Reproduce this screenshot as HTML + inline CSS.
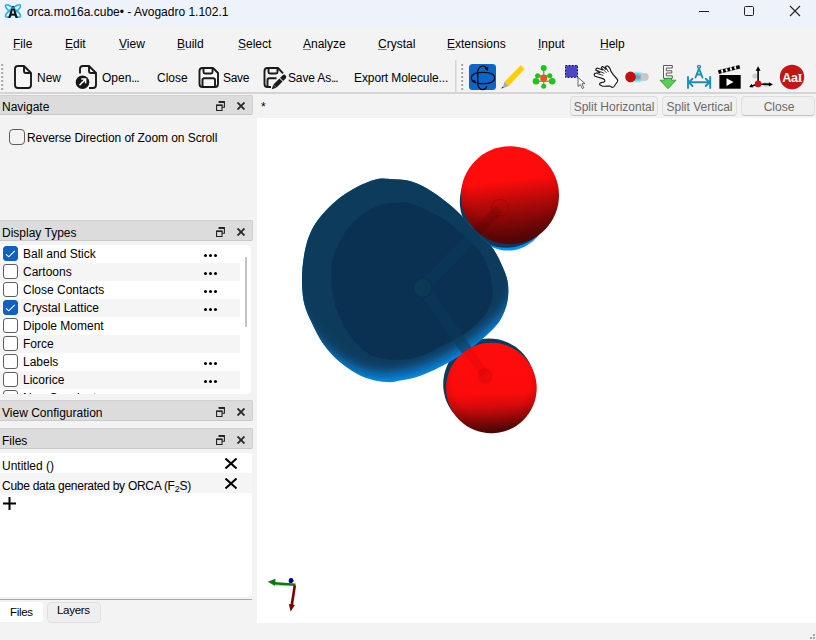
<!DOCTYPE html>
<html><head><meta charset="utf-8">
<style>
*{margin:0;padding:0;box-sizing:border-box}
html,body{width:816px;height:640px;overflow:hidden;background:#f3f3f3;font-family:"Liberation Sans",sans-serif;color:#000}
.a{position:absolute}
.t{position:absolute;white-space:nowrap;font-size:12px;line-height:14px}
.u{text-decoration:underline;text-decoration-color:#7a7a7a;text-underline-offset:1px;text-decoration-thickness:1.3px}
#title{left:0;top:0;width:816px;height:27px;background:linear-gradient(#eef3fb 0,#eef3fb 26px,#f0f2f6 26px)}
#menu{left:0;top:27px;width:816px;height:33px;background:#f3f3f3}
#tool{left:0;top:60px;width:816px;height:34px;background:#f3f3f3;border-bottom:2px solid #d4d4d4}
.hdr{position:absolute;left:0;width:253px;height:20px;background:#dcdcdc;border:1px solid #d0d0d0;border-bottom-color:#c8c8c8;border-left:none;border-radius:0 2px 2px 0}
.hdr .t{left:2px;top:4px;font-size:12px}
.fl{position:absolute;left:216px;top:5px;width:9px;height:10px}
.cx{position:absolute;left:237px;top:6px;width:8px;height:8px}
.h21{height:21px}.h21 .fl{top:6px}.h21 .cx{top:7px}
.row{position:absolute;left:0;width:240px;height:18px}
.row.g{background:#f5f5f5}
.cb{position:absolute;left:3px;top:1px;width:15px;height:15px;border:1px solid #5e5e5e;border-radius:3px;background:#fff}
.cb.on{background:#0f5fc4;border-color:#0f5fc4}
.row .t{left:23px;top:2px}
.dots{position:absolute;left:204px;top:9px;width:14px;height:3px}
.dots i{position:absolute;top:0;width:3px;height:3px;border-radius:50%;background:#000}
.btn{position:absolute;top:96px;height:20px;border:1px solid #dedede;border-bottom-color:#c4c4c4;border-radius:4px;background:#f0f0f0;color:#6a6a6a;font-size:12px;line-height:18px;padding-top:1px;text-align:center}
</style></head><body>
<!-- Title bar -->
<div id="title" class="a">
  <svg class="a" style="left:4px;top:2px" width="18" height="18" viewBox="0 0 18 18">
    <g fill="none" stroke="#1fb4ea" stroke-width="1.5">
      <ellipse cx="9" cy="9" rx="9.3" ry="2.6" transform="rotate(38 9 9)"/>
      <ellipse cx="9" cy="9" rx="9.3" ry="2.6" transform="rotate(-38 9 9)"/>
    </g>
    <path d="M4.2 16 L8 4.2 L10 4.2 L13.8 16 L11.6 16 L9 7.6 L6.4 16 Z M6.6 12 h4.8 v1.5 h-4.8z" fill="#111"/>
    <path d="M7.3 6 L10.7 6" stroke="#1fb4ea" stroke-width="1.3"/>
  </svg>
  <div class="t" style="left:27px;top:5px;font-size:12px">orca.mo16a.cube• - Avogadro 1.102.1</div>
  <div class="a" style="left:699px;top:11px;width:10px;height:1px;background:#222"></div>
  <div class="a" style="left:744px;top:6px;width:10px;height:10px;border:1px solid #222;border-radius:1.5px"></div>
  <svg class="a" style="left:789px;top:5px" width="12" height="12" viewBox="0 0 12 12"><path d="M1 1L11 11M11 1L1 11" stroke="#222" stroke-width="1.1"/></svg>
</div>
<!-- Menu bar -->
<div id="menu" class="a">
  <div class="t" style="left:13px;top:10px"><span class="u">F</span>ile</div>
  <div class="t" style="left:65px;top:10px"><span class="u">E</span>dit</div>
  <div class="t" style="left:119px;top:10px"><span class="u">V</span>iew</div>
  <div class="t" style="left:177px;top:10px"><span class="u">B</span>uild</div>
  <div class="t" style="left:238px;top:10px"><span class="u">S</span>elect</div>
  <div class="t" style="left:303px;top:10px"><span class="u">A</span>nalyze</div>
  <div class="t" style="left:378px;top:10px"><span class="u">C</span>rystal</div>
  <div class="t" style="left:447px;top:10px"><span class="u">E</span>xtensions</div>
  <div class="t" style="left:538px;top:10px"><span class="u">I</span>nput</div>
  <div class="t" style="left:600px;top:10px"><span class="u">H</span>elp</div>
</div>
<!-- Toolbar -->
<div id="tool" class="a">
  <div class="t" style="left:37px;top:11px">New</div>
  <div class="t" style="left:102px;top:11px">Open<span style="letter-spacing:-0.9px">...</span></div>
  <div class="t" style="left:157px;top:11px">Close</div>
  <div class="t" style="left:223px;top:11px;letter-spacing:-0.3px">Save</div>
  <div class="t" style="left:288px;top:11px;letter-spacing:-0.15px">Save As<span style="letter-spacing:-1.2px">...</span></div>
  <div class="t" style="left:354px;top:11px;letter-spacing:-0.1px">Export Molecule...</div>
</div>
<svg class="a" style="left:0;top:0" width="816" height="96" viewBox="0 0 816 96">
  <!-- grips -->
  <g fill="#a8a8a8"><rect x="1.2" y="64" width="2" height="2"/><rect x="1.2" y="68" width="2" height="2"/><rect x="1.2" y="72" width="2" height="2"/><rect x="1.2" y="76" width="2" height="2"/><rect x="1.2" y="80" width="2" height="2"/><rect x="1.2" y="84" width="2" height="2"/><rect x="1.2" y="88" width="2" height="2"/><rect x="461.2" y="64" width="2" height="2"/><rect x="461.2" y="68" width="2" height="2"/><rect x="461.2" y="72" width="2" height="2"/><rect x="461.2" y="76" width="2" height="2"/><rect x="461.2" y="80" width="2" height="2"/><rect x="461.2" y="84" width="2" height="2"/><rect x="461.2" y="88" width="2" height="2"/></g>
  <rect x="455" y="60" width="1.5" height="32" fill="#d6d6d6"/>
  <!-- New -->
  <g fill="#f8f8f8" stroke="#1a1a1a" stroke-width="1.9" stroke-linejoin="round">
    <path d="M15 69 Q15 66 18 66 H24 L31 73 V85 Q31 88 28 88 H18 Q15 88 15 85 Z"/>
    <path d="M24 66 V71 Q24 73 26 73 H31" fill="none"/>
  </g>
  <!-- Open -->
  <g fill="none" stroke="#1a1a1a" stroke-width="1.9" stroke-linejoin="round">
    <path d="M80 73.5 V69 Q80 66 83 66 H89 L96 73 V85 Q96 88 93 88 H89"/>
    <path d="M89 66 V71 Q89 73 91 73 H96"/>
  </g>
  <circle cx="82.5" cy="82.2" r="6.8" fill="#161616"/>
  <path d="M79.5 85.2 L85.3 79.4 M81.3 79 H85.6 V83.3" fill="none" stroke="#fff" stroke-width="1.5"/>
  <!-- Save -->
  <g fill="#f8f8f8" stroke="#1a1a1a" stroke-width="1.9" stroke-linejoin="round">
    <path d="M199.5 71 Q199.5 68 202.5 68 H213 L218 73 V84 Q218 87 215 87 H202.5 Q199.5 87 199.5 84 Z"/>
    <path d="M203.5 68 V72 Q203.5 73.5 205 73.5 H211 Q212.5 73.5 212.5 72 V68" fill="none"/>
    <path d="M202.5 87 V80 Q202.5 78.3 204.3 78.3 H213.2 Q215 78.3 215 80 V87" fill="none"/>
  </g>
  <!-- Save As -->
  <g fill="none" stroke="#1a1a1a" stroke-width="1.9" stroke-linejoin="round">
    <path d="M283 73.3 L278 68 H267.5 Q264.5 68 264.5 71 V84 Q264.5 87 267.5 87 H271"/>
    <path d="M268.5 68 V72 Q268.5 73.5 270 73.5 H276 Q277.5 73.5 277.5 72 V68"/>
    <path d="M267.5 87 V80 Q267.5 78.3 269.3 78.3 H276.5"/>
  </g>
  <path d="M273.44 84.44 L279.44 78.44 L282.56 81.56 L276.56 87.56 Z M273.2 84.7 L276.3 87.8 L271.8 89.2 Z" fill="#1a1a1a"/>
  <path d="M280.01 77.87 L282.74 75.14 Q284.3 73.9 285.5 75.2 Q286.9 76.7 285.86 78.26 L283.13 80.99 Z" fill="#1a1a1a"/>
  <!-- Navigate -->
  <rect x="469" y="64" width="27" height="26" rx="3.5" fill="#0a66c8"/>
  <g fill="none" stroke="#000" stroke-width="1.15">
    <path d="M476.5 83 Q471.3 80.8 471.3 78 Q471.3 72.3 483 72.3 Q494.7 72.3 494.7 78 Q494.7 83.7 483 83.7 Q480.5 83.7 478.2 83.4"/>
    <path d="M477.6 72.8 Q478.2 66 483 66 Q485.3 66 486.3 68"/>
    <path d="M477.6 83.3 Q478.4 89.6 482.8 89.6 Q485.6 89.6 486.8 86.2"/>
    <path d="M477.8 72.5 V83.5"/>
  </g>
  <path d="M484.6 68.3 L488.4 67 L487.6 71.3 Z" fill="#000"/>
  <path d="M471.2 81.3 L475.4 80.2 L475.5 83.6 Z" fill="#000"/>
  <!-- Pencil -->
  <path d="M520.9 65.3 L524.6 69 L508.6 86 L504.3 82 Z" fill="#fcd000"/>
  <path d="M504.3 82 L508.6 86 L502.7 88.3 Z" fill="#a8a8a8"/>
  <path d="M501.2 88.8 L502.2 86.4 L503.8 87.8 Z" fill="#404040"/>
  <!-- Molecule -->
  <g stroke="#8a9a6a" stroke-width="1.4">
    <path d="M543.7 68 V86.3 M537.6 75.7 L549.8 75.7 M536 81.3 L552.2 81.3"/>
  </g>
  <g fill="#1ec41e">
    <circle cx="543.7" cy="68" r="3"/><circle cx="537.6" cy="75.7" r="2.5"/><circle cx="549.8" cy="75.7" r="2.5"/>
    <circle cx="536" cy="81.3" r="3.3"/><circle cx="552.2" cy="81.3" r="3.3"/><circle cx="543.7" cy="86.3" r="2.5"/>
  </g>
  <circle cx="543.7" cy="78.1" r="3.6" fill="#e05a20"/>
  <!-- Select -->
  <rect x="565.5" y="65.5" width="12" height="11.8" fill="#4848c0" stroke="#000" stroke-width="1" stroke-dasharray="1.6 1.6"/>
  <path d="M578 77.5 V86.5 L580.3 84.5 L582.3 88.5 L583.8 87.8 L581.9 83.8 L585 83.6 Z" fill="#fff" stroke="#555" stroke-width="0.9" stroke-linejoin="round"/>
  <!-- Hand -->
  <g transform="translate(590 60)">
  <path d="M12.2 26.1 C14 26.5 18 26 20.2 26.1 L21.8 27.2 C23 27.6 23.6 27 24 26.5 L27.5 21.5 C28 20.5 27.6 19.6 27 19 L23 14.4 L21 11.4 C20.5 9.5 19.5 7 17.6 6.1 C16.5 5.7 15.5 6.5 15.6 7.8 L16.2 9.5 L13.5 7 C12.8 6.2 11.5 6.8 11.4 7.8 L12.8 10 L8.5 8.5 C7 7.6 5.5 8.8 5.8 10.1 L10 12.8 L6 13 C4.5 13 4 14.5 4.4 15.5 C4.8 16.3 5.5 16.5 5.9 16.5 L12.8 18.6 C14 19 15 20 14.9 20.8 C14.8 21.8 14 22.3 13 22.3 L10.6 22.9 C9.5 23.2 9.5 24.5 9.8 24.8 Z" fill="#fff" stroke="#151515" stroke-width="1.15" stroke-linejoin="round"/>
  <path d="M6.5 13.4 L13.3 15.4 M6.9 10.4 L14.4 13.3 M12.3 8.5 L16.5 12.8 M16.2 8 L18.6 12.2" stroke="#222" stroke-width="0.9" fill="none"/>
  </g>
  <!-- Atom -->
  <defs><radialGradient id="glow" cx="0.5" cy="0.5" r="0.5"><stop offset="0" stop-color="#1aa8d8"/><stop offset="0.6" stop-color="#5ac8e8" stop-opacity="0.7"/><stop offset="1" stop-color="#bfe8f5" stop-opacity="0"/></radialGradient></defs>
  <ellipse cx="637" cy="77" rx="11" ry="6.5" fill="url(#glow)"/>
  <rect x="634" y="76.2" width="7" height="1.6" fill="#f07070"/>
  <circle cx="630.5" cy="76.9" r="5.3" fill="#c01010"/>
  <circle cx="644.7" cy="76.9" r="4" fill="#c8c8c8"/>
  <!-- E arrow -->
  <path d="M663.5 65.5 H672.3 V68 H666.3 V70.8 H671.8 V73 H666.3 V75.8 H672.3 V78.3 H663.5 Z" fill="#fafafa" stroke="#5a5a5a" stroke-width="1"/>
  <path d="M664.5 78.5 V80.2 H660 L668 88.7 L676 80.2 H671.5 V78.5 Z" fill="#55d055" stroke="#2e8e2e" stroke-width="0.8" stroke-linejoin="round"/>
  <!-- Measure -->
  <g fill="none" stroke="#1a90b8" stroke-width="1.9" stroke-linecap="round">
    <path d="M688 77 V88 M710.2 77 V88 M688.5 82.3 H709.7 M692.5 78.7 L688.7 82.3 L692.5 86 M705.7 78.7 L709.5 82.3 L705.7 86"/>
    <path d="M695.5 77.5 L699 68.5 L702.5 77.5 M697 74.5 H701"/>
  </g>
  <circle cx="699" cy="66.8" r="1.5" fill="none" stroke="#1a90b8" stroke-width="1.3"/>
  <!-- Clapper -->
  <rect x="719.4" y="75" width="21.3" height="13.7" fill="#000"/>
  <path d="M726.5 78.2 V86 L733.5 82.1 Z" fill="#fff"/>
  <g transform="rotate(-14 729 69)">
    <rect x="718" y="67.5" width="22" height="3.8" fill="#000"/>
    <g fill="#fff"><rect x="721" y="67.8" width="1.8" height="3.2"/><rect x="725.5" y="67.8" width="1.8" height="3.2"/><rect x="730" y="67.8" width="1.8" height="3.2"/><rect x="734.5" y="67.8" width="1.8" height="3.2"/></g>
  </g>
  <!-- Axes -->
  <circle cx="754.9" cy="76" r="2.6" fill="#cfcfcf"/>
  <circle cx="765.5" cy="84.5" r="2.6" fill="#cfcfcf"/>
  <g stroke="#000" stroke-width="1.6">
    <path d="M758.1 84 V70 M758.1 84 L771 84.4 M758.1 84 L750.5 86.4"/>
  </g>
  <path d="M758.1 66.2 L755.6 70.8 H760.6 Z M773 84.4 L768.8 82.2 V86.6 Z M749.2 87 L751.7 83.7 L753 87.5 Z" fill="#000"/>
  <circle cx="758.1" cy="83.9" r="3.3" fill="#d01010"/>
  <!-- AaI -->
  <circle cx="792" cy="77" r="12.2" fill="#c41414"/>
  <text x="782.2" y="81.8" font-family="Liberation Sans" font-weight="bold" font-size="12.6" letter-spacing="-0.2" fill="#fff">Aa</text>
  <text x="797.6" y="81.8" font-family="Liberation Serif" font-weight="bold" font-size="12.6" fill="#fff">I</text>
</svg>
<!-- Left dock -->
<div class="hdr" style="top:95px"><div class="t">Navigate</div>
  <svg class="fl" viewBox="0 0 9 10"><path d="M3 1.2h5.4v5H6.2M.6 4.4h5.4v5.1H.6z" fill="none" stroke="#222" stroke-width="1.1"/><path d="M2.5 .1h6.4v1.6H2.5zM.1 3.4h6.4v1.6H.1z" fill="#222"/></svg>
  <svg class="cx" viewBox="0 0 8 8"><path d="M.5 .5l7 7M7.5 .5l-7 7" stroke="#2a2a2a" stroke-width="1.9"/></svg>
</div>
<div class="cb a" style="left:9px;top:129px;width:16px;height:16px;border-radius:4px;background:#f3f3f3"></div>
<div class="t" style="left:27px;top:131px;letter-spacing:-0.07px">Reverse Direction of Zoom on Scroll</div>

<div class="hdr h21" style="top:220px"><div class="t" style="top:5px">Display Types</div>
  <svg class="fl" viewBox="0 0 9 10"><path d="M3 1.2h5.4v5H6.2M.6 4.4h5.4v5.1H.6z" fill="none" stroke="#222" stroke-width="1.1"/><path d="M2.5 .1h6.4v1.6H2.5zM.1 3.4h6.4v1.6H.1z" fill="#222"/></svg>
  <svg class="cx" viewBox="0 0 8 8"><path d="M.5 .5l7 7M7.5 .5l-7 7" stroke="#2a2a2a" stroke-width="1.9"/></svg>
</div>
<div class="a" style="left:0;top:245px;width:251px;height:149px;background:#fff;border-radius:0 5px 5px 0;overflow:hidden">
  <div class="row" style="top:0"><div class="cb on"><svg class="a" style="left:-1px;top:-1px" width="15" height="15" viewBox="0 0 15 15"><path d="M3 8.3 L5.8 10.8 L11.8 4.8" fill="none" stroke="#fff" stroke-width="1.1"/></svg></div><div class="t">Ball and Stick</div><div class="dots"><i style="left:0"></i><i style="left:5px"></i><i style="left:10px"></i></div></div>
  <div class="row g" style="top:18px"><div class="cb"></div><div class="t">Cartoons</div><div class="dots"><i style="left:0"></i><i style="left:5px"></i><i style="left:10px"></i></div></div>
  <div class="row" style="top:36px"><div class="cb"></div><div class="t">Close Contacts</div><div class="dots"><i style="left:0"></i><i style="left:5px"></i><i style="left:10px"></i></div></div>
  <div class="row g" style="top:54px"><div class="cb on"><svg class="a" style="left:-1px;top:-1px" width="15" height="15" viewBox="0 0 15 15"><path d="M3 8.3 L5.8 10.8 L11.8 4.8" fill="none" stroke="#fff" stroke-width="1.1"/></svg></div><div class="t">Crystal Lattice</div><div class="dots"><i style="left:0"></i><i style="left:5px"></i><i style="left:10px"></i></div></div>
  <div class="row" style="top:72px"><div class="cb"></div><div class="t">Dipole Moment</div></div>
  <div class="row g" style="top:90px"><div class="cb"></div><div class="t">Force</div></div>
  <div class="row" style="top:108px"><div class="cb"></div><div class="t">Labels</div><div class="dots"><i style="left:0"></i><i style="left:5px"></i><i style="left:10px"></i></div></div>
  <div class="row g" style="top:126px"><div class="cb"></div><div class="t">Licorice</div><div class="dots"><i style="left:0"></i><i style="left:5px"></i><i style="left:10px"></i></div></div>
  <div class="row" style="top:144px"><div class="cb"></div><div class="t">Non-Covalent</div></div>
  <div class="a" style="left:245px;top:12px;width:2px;height:70px;background:#c2c2c2;border-radius:1px"></div>
</div>

<div class="hdr h21" style="top:400px"><div class="t" style="top:5px">View Configuration</div>
  <svg class="fl" viewBox="0 0 9 10"><path d="M3 1.2h5.4v5H6.2M.6 4.4h5.4v5.1H.6z" fill="none" stroke="#222" stroke-width="1.1"/><path d="M2.5 .1h6.4v1.6H2.5zM.1 3.4h6.4v1.6H.1z" fill="#222"/></svg>
  <svg class="cx" viewBox="0 0 8 8"><path d="M.5 .5l7 7M7.5 .5l-7 7" stroke="#2a2a2a" stroke-width="1.9"/></svg>
</div>
<div class="hdr h21" style="top:428px"><div class="t" style="top:5px">Files</div>
  <svg class="fl" viewBox="0 0 9 10"><path d="M3 1.2h5.4v5H6.2M.6 4.4h5.4v5.1H.6z" fill="none" stroke="#222" stroke-width="1.1"/><path d="M2.5 .1h6.4v1.6H2.5zM.1 3.4h6.4v1.6H.1z" fill="#222"/></svg>
  <svg class="cx" viewBox="0 0 8 8"><path d="M.5 .5l7 7M7.5 .5l-7 7" stroke="#2a2a2a" stroke-width="1.9"/></svg>
</div>
<div class="a" style="left:0;top:453px;width:252px;height:144px;background:#fff;border-radius:0 0 5px 0">
  <div class="t" style="left:2px;top:6px">Untitled ()</div>
  <svg class="a" style="left:225px;top:5px" width="12" height="11" viewBox="0 0 12 11"><path d="M.5 .5l11 10M11.5 .5l-11 10" stroke="#000" stroke-width="2"/></svg>
  <div class="a" style="left:0;top:20px;width:252px;height:20px;background:#f5f5f5"></div>
  <div class="t" style="left:2px;top:26px;letter-spacing:-0.27px">Cube data generated by ORCA (F<sub style="font-size:9px;vertical-align:-2px">2</sub>S)</div>
  <svg class="a" style="left:225px;top:25px" width="12" height="11" viewBox="0 0 12 11"><path d="M.5 .5l11 10M11.5 .5l-11 10" stroke="#000" stroke-width="2"/></svg>
  <svg class="a" style="left:3px;top:44px" width="13" height="13" viewBox="0 0 13 13"><path d="M6.5 0v13M0 6.5h13" stroke="#000" stroke-width="2"/></svg>
</div>
<div class="a" style="left:0;top:599px;width:252px;height:1px;background:#a8a8a8"></div>
<div class="a" style="left:0;top:602px;width:43px;height:20px;background:#fff;border-radius:0 4px 4px 0"></div>
<div class="t" style="left:10px;top:605px;letter-spacing:-0.3px;font-size:11.5px">Files</div>
<div class="a" style="left:47px;top:602px;width:54px;height:21px;background:#efefef;border:1px solid #e0e0e0;border-radius:4px"></div>
<div class="t" style="left:57px;top:603px;letter-spacing:-0.3px;font-size:11.5px">Layers</div>

<!-- Central tab bar -->
<div class="t" style="left:261px;top:100px">*</div>
<div class="btn" style="left:570px;width:88px">Split Horizontal</div>
<div class="btn" style="left:662px;width:75px">Split Vertical</div>
<div class="btn" style="left:741px;width:74px;padding-left:2px">Close</div>
<!-- 3D view -->
<div class="a" id="view" style="left:257px;top:118px;width:559px;height:505px;background:#fff"></div>
<!--MOL-->
<svg class="a" style="left:0;top:0" width="816" height="640" viewBox="0 0 816 640">
  <defs>
    <clipPath id="clipO"><path d="M390.0 179.0 C395.7 179.3 403.8 179.4 410.0 181.0 C416.2 182.6 421.8 185.7 427.0 188.5 C432.2 191.3 436.1 194.2 441.2 198.1 C446.4 202.0 453.3 207.7 458.1 212.2 C462.9 216.7 466.0 220.7 470.0 225.0 C474.0 229.3 478.4 234.3 482.0 238.0 C485.6 241.7 488.7 242.6 491.9 246.9 C495.1 251.2 498.6 257.8 501.2 263.8 C503.9 269.7 506.8 276.0 507.8 282.5 C508.8 289.0 508.4 296.4 507.2 302.5 C506.0 308.6 503.6 314.4 500.6 319.4 C497.6 324.4 494.5 327.6 489.4 332.5 C484.3 337.4 477.0 343.6 470.0 348.8 C463.0 353.9 454.0 359.4 447.5 363.1 C441.0 366.9 436.7 368.9 431.2 371.2 C425.8 373.6 420.2 375.9 415.0 377.5 C409.8 379.1 404.1 379.8 400.0 380.6 C395.9 381.4 395.0 382.2 390.6 382.2 C386.2 382.1 379.4 381.7 373.8 380.3 C368.1 378.9 362.8 377.0 356.9 373.8 C351.0 370.5 343.7 365.6 338.1 360.6 C332.5 355.6 327.5 350.0 323.1 343.8 C318.7 337.5 315.0 329.7 311.9 323.1 C308.8 316.5 306.0 310.6 304.4 304.4 C302.8 298.2 302.4 292.1 302.1 286.0 C301.8 279.9 302.0 273.7 302.5 267.5 C303.0 261.3 304.1 254.4 305.3 248.8 C306.6 243.1 308.0 238.4 310.0 233.8 C312.0 229.1 314.4 225.0 317.5 220.6 C320.6 216.2 324.7 211.6 328.8 207.5 C332.8 203.4 337.2 199.6 341.9 196.2 C346.6 192.8 351.3 189.7 356.9 186.9 C362.5 184.1 370.1 180.7 375.6 179.4 C381.1 178.1 384.3 178.7 390.0 179.0Z"/></clipPath>
    <filter id="bl" x="-30%" y="-30%" width="160%" height="160%"><feGaussianBlur stdDeviation="7"/></filter>
    <filter id="bl1" x="-30%" y="-30%" width="160%" height="160%"><feGaussianBlur stdDeviation="3"/></filter>
    <linearGradient id="rs1" x1="0" y1="0" x2="0.12" y2="1"><stop offset="0" stop-color="#ff0c0c"/><stop offset="0.4" stop-color="#fe0b0b"/><stop offset="0.52" stop-color="#d80a0a"/><stop offset="0.68" stop-color="#a60909"/><stop offset="0.85" stop-color="#780707"/><stop offset="1" stop-color="#5c0606"/></linearGradient>
    <linearGradient id="rs2" x1="0" y1="0" x2="0.05" y2="1"><stop offset="0" stop-color="#ff0c0c"/><stop offset="0.58" stop-color="#fc0b0b"/><stop offset="0.72" stop-color="#d80a0a"/><stop offset="0.86" stop-color="#980808"/><stop offset="1" stop-color="#560606"/></linearGradient>
    <radialGradient id="rim" cx="0.5" cy="0.4" r="0.6"><stop offset="0.7" stop-color="#300000" stop-opacity="0"/><stop offset="1" stop-color="#300000" stop-opacity="0.22"/></radialGradient>
  </defs>
  <!-- lobes behind spheres -->
  <ellipse cx="508" cy="203" rx="42" ry="47.5" fill="#0a90f4"/>
  <circle cx="506" cy="201.5" r="46.2" fill="#0b3a5c"/>
  <circle cx="489" cy="384.2" r="45.8" fill="#0b3a5c"/>
  <!-- blob -->
  <path d="M390.0 179.0 C395.7 179.3 403.8 179.4 410.0 181.0 C416.2 182.6 421.8 185.7 427.0 188.5 C432.2 191.3 436.1 194.2 441.2 198.1 C446.4 202.0 453.3 207.7 458.1 212.2 C462.9 216.7 466.0 220.7 470.0 225.0 C474.0 229.3 478.4 234.3 482.0 238.0 C485.6 241.7 488.7 242.6 491.9 246.9 C495.1 251.2 498.6 257.8 501.2 263.8 C503.9 269.7 506.8 276.0 507.8 282.5 C508.8 289.0 508.4 296.4 507.2 302.5 C506.0 308.6 503.6 314.4 500.6 319.4 C497.6 324.4 494.5 327.6 489.4 332.5 C484.3 337.4 477.0 343.6 470.0 348.8 C463.0 353.9 454.0 359.4 447.5 363.1 C441.0 366.9 436.7 368.9 431.2 371.2 C425.8 373.6 420.2 375.9 415.0 377.5 C409.8 379.1 404.1 379.8 400.0 380.6 C395.9 381.4 395.0 382.2 390.6 382.2 C386.2 382.1 379.4 381.7 373.8 380.3 C368.1 378.9 362.8 377.0 356.9 373.8 C351.0 370.5 343.7 365.6 338.1 360.6 C332.5 355.6 327.5 350.0 323.1 343.8 C318.7 337.5 315.0 329.7 311.9 323.1 C308.8 316.5 306.0 310.6 304.4 304.4 C302.8 298.2 302.4 292.1 302.1 286.0 C301.8 279.9 302.0 273.7 302.5 267.5 C303.0 261.3 304.1 254.4 305.3 248.8 C306.6 243.1 308.0 238.4 310.0 233.8 C312.0 229.1 314.4 225.0 317.5 220.6 C320.6 216.2 324.7 211.6 328.8 207.5 C332.8 203.4 337.2 199.6 341.9 196.2 C346.6 192.8 351.3 189.7 356.9 186.9 C362.5 184.1 370.1 180.7 375.6 179.4 C381.1 178.1 384.3 178.7 390.0 179.0Z" fill="#0a94f8"/>
  <g clip-path="url(#clipO)">
    <g filter="url(#bl)"><path d="M390.0 179.0 C395.7 179.3 403.8 179.4 410.0 181.0 C416.2 182.6 421.8 185.7 427.0 188.5 C432.2 191.3 436.1 194.2 441.2 198.1 C446.4 202.0 453.3 207.7 458.1 212.2 C462.9 216.7 466.0 220.7 470.0 225.0 C474.0 229.3 478.4 234.3 482.0 238.0 C485.6 241.7 488.7 242.6 491.9 246.9 C495.1 251.2 498.6 257.8 501.2 263.8 C503.9 269.7 506.8 276.0 507.8 282.5 C508.8 289.0 508.4 296.4 507.2 302.5 C506.0 308.6 503.6 314.4 500.6 319.4 C497.6 324.4 494.5 327.6 489.4 332.5 C484.3 337.4 477.0 343.6 470.0 348.8 C463.0 353.9 454.0 359.4 447.5 363.1 C441.0 366.9 436.7 368.9 431.2 371.2 C425.8 373.6 420.2 375.9 415.0 377.5 C409.8 379.1 404.1 379.8 400.0 380.6 C395.9 381.4 395.0 382.2 390.6 382.2 C386.2 382.1 379.4 381.7 373.8 380.3 C368.1 378.9 362.8 377.0 356.9 373.8 C351.0 370.5 343.7 365.6 338.1 360.6 C332.5 355.6 327.5 350.0 323.1 343.8 C318.7 337.5 315.0 329.7 311.9 323.1 C308.8 316.5 306.0 310.6 304.4 304.4 C302.8 298.2 302.4 292.1 302.1 286.0 C301.8 279.9 302.0 273.7 302.5 267.5 C303.0 261.3 304.1 254.4 305.3 248.8 C306.6 243.1 308.0 238.4 310.0 233.8 C312.0 229.1 314.4 225.0 317.5 220.6 C320.6 216.2 324.7 211.6 328.8 207.5 C332.8 203.4 337.2 199.6 341.9 196.2 C346.6 192.8 351.3 189.7 356.9 186.9 C362.5 184.1 370.1 180.7 375.6 179.4 C381.1 178.1 384.3 178.7 390.0 179.0Z" transform="translate(-3 -22)" fill="#0b3a5c" stroke="#0b3a5c" stroke-width="30" stroke-linejoin="round"/></g>
    <path d="M392.5 202.8 C400.0 202.0 406.6 202.0 415.0 204.7 C423.4 207.4 435.2 213.9 443.0 218.8 C450.8 223.6 456.0 228.4 462.0 233.8 C468.0 239.1 474.4 245.0 478.8 250.6 C483.1 256.2 485.9 262.6 488.0 267.5 C490.1 272.4 490.6 275.1 491.2 280.0 C491.9 284.9 493.1 291.3 492.2 296.9 C491.3 302.5 489.5 308.1 485.6 313.8 C481.7 319.4 475.3 325.6 468.8 330.6 C462.2 335.6 455.2 339.2 446.2 343.8 C437.3 348.3 425.5 355.5 415.0 358.0 C404.5 360.5 391.9 360.2 383.1 358.8 C374.4 357.3 368.8 354.4 362.5 349.4 C356.2 344.4 350.3 336.6 345.6 328.8 C340.9 320.9 336.7 310.6 334.4 302.5 C332.1 294.4 331.9 287.1 331.6 280.0 C331.3 272.9 331.1 266.5 332.5 260.0 C333.9 253.5 336.9 247.2 340.0 241.2 C343.1 235.3 346.2 229.7 351.2 224.4 C356.2 219.1 363.1 213.0 370.0 209.4 C376.9 205.8 385.0 203.6 392.5 202.8Z" fill="#0b3152"/>
  </g>
  <!-- bonds -->
  <g stroke="#0c3a5c" stroke-width="11.5" opacity="0.55">
    <path d="M428.5 281.5 L502 206.5 M428 294.5 L484.5 376"/>
  </g>
  <circle cx="422.8" cy="287.8" r="10.5" fill="#0b2f4c" opacity="0.4"/>
  <circle cx="422.8" cy="287.8" r="8.9" fill="#0c3c56" opacity="0.85"/>
  <!-- spheres -->
  <circle cx="510" cy="195.3" r="49" fill="url(#rs1)"/>
  <circle cx="510" cy="195.3" r="49" fill="url(#rim)"/>
  <circle cx="491.4" cy="388" r="45.3" fill="url(#rs2)"/>
  <circle cx="491.4" cy="388" r="45.3" fill="url(#rim)"/>
  <path d="M477 231.7 L499 209" stroke="#400000" stroke-width="10" opacity="0.16"/>
  <circle cx="500" cy="207.8" r="8.5" fill="none" stroke="#400000" stroke-width="1" opacity="0.18"/>
  <circle cx="485" cy="376" r="7.7" fill="#a00000" opacity="0.18"/>
  <path d="M466 349 L485 374" stroke="#a00000" stroke-width="9" opacity="0.12"/>
  <!-- axes -->
  <path d="M295.5 584.8 L274 583.3" stroke="#0a780a" stroke-width="2.6"/>
  <path d="M267.8 581.8 L275.5 578.8 L275.2 586 Z" fill="#0a780a"/>
  <path d="M276 585.2 L293 585.9" stroke="#1ec81e" stroke-width="0.9" opacity="0.5"/>
  <path d="M288.5 581 L289.5 578.3 L292.3 578 L293.8 581 L292 583 L289.5 583 Z" fill="#000080"/>
  <path d="M294.8 585.5 L291.8 605" stroke="#7a0000" stroke-width="2.6"/>
  <path d="M288.8 604 L295 605 L290.6 611.5 Z" fill="#7a0000"/>
</svg>
<!--/MOL-->
<!-- status grip -->
<div class="a" style="left:810px;top:637px;width:2px;height:2px;background:#a8a8a8"></div>
<div class="a" style="left:813px;top:637px;width:2px;height:2px;background:#a8a8a8"></div>
<div class="a" style="left:813px;top:634px;width:2px;height:2px;background:#a8a8a8"></div>
</body></html>
